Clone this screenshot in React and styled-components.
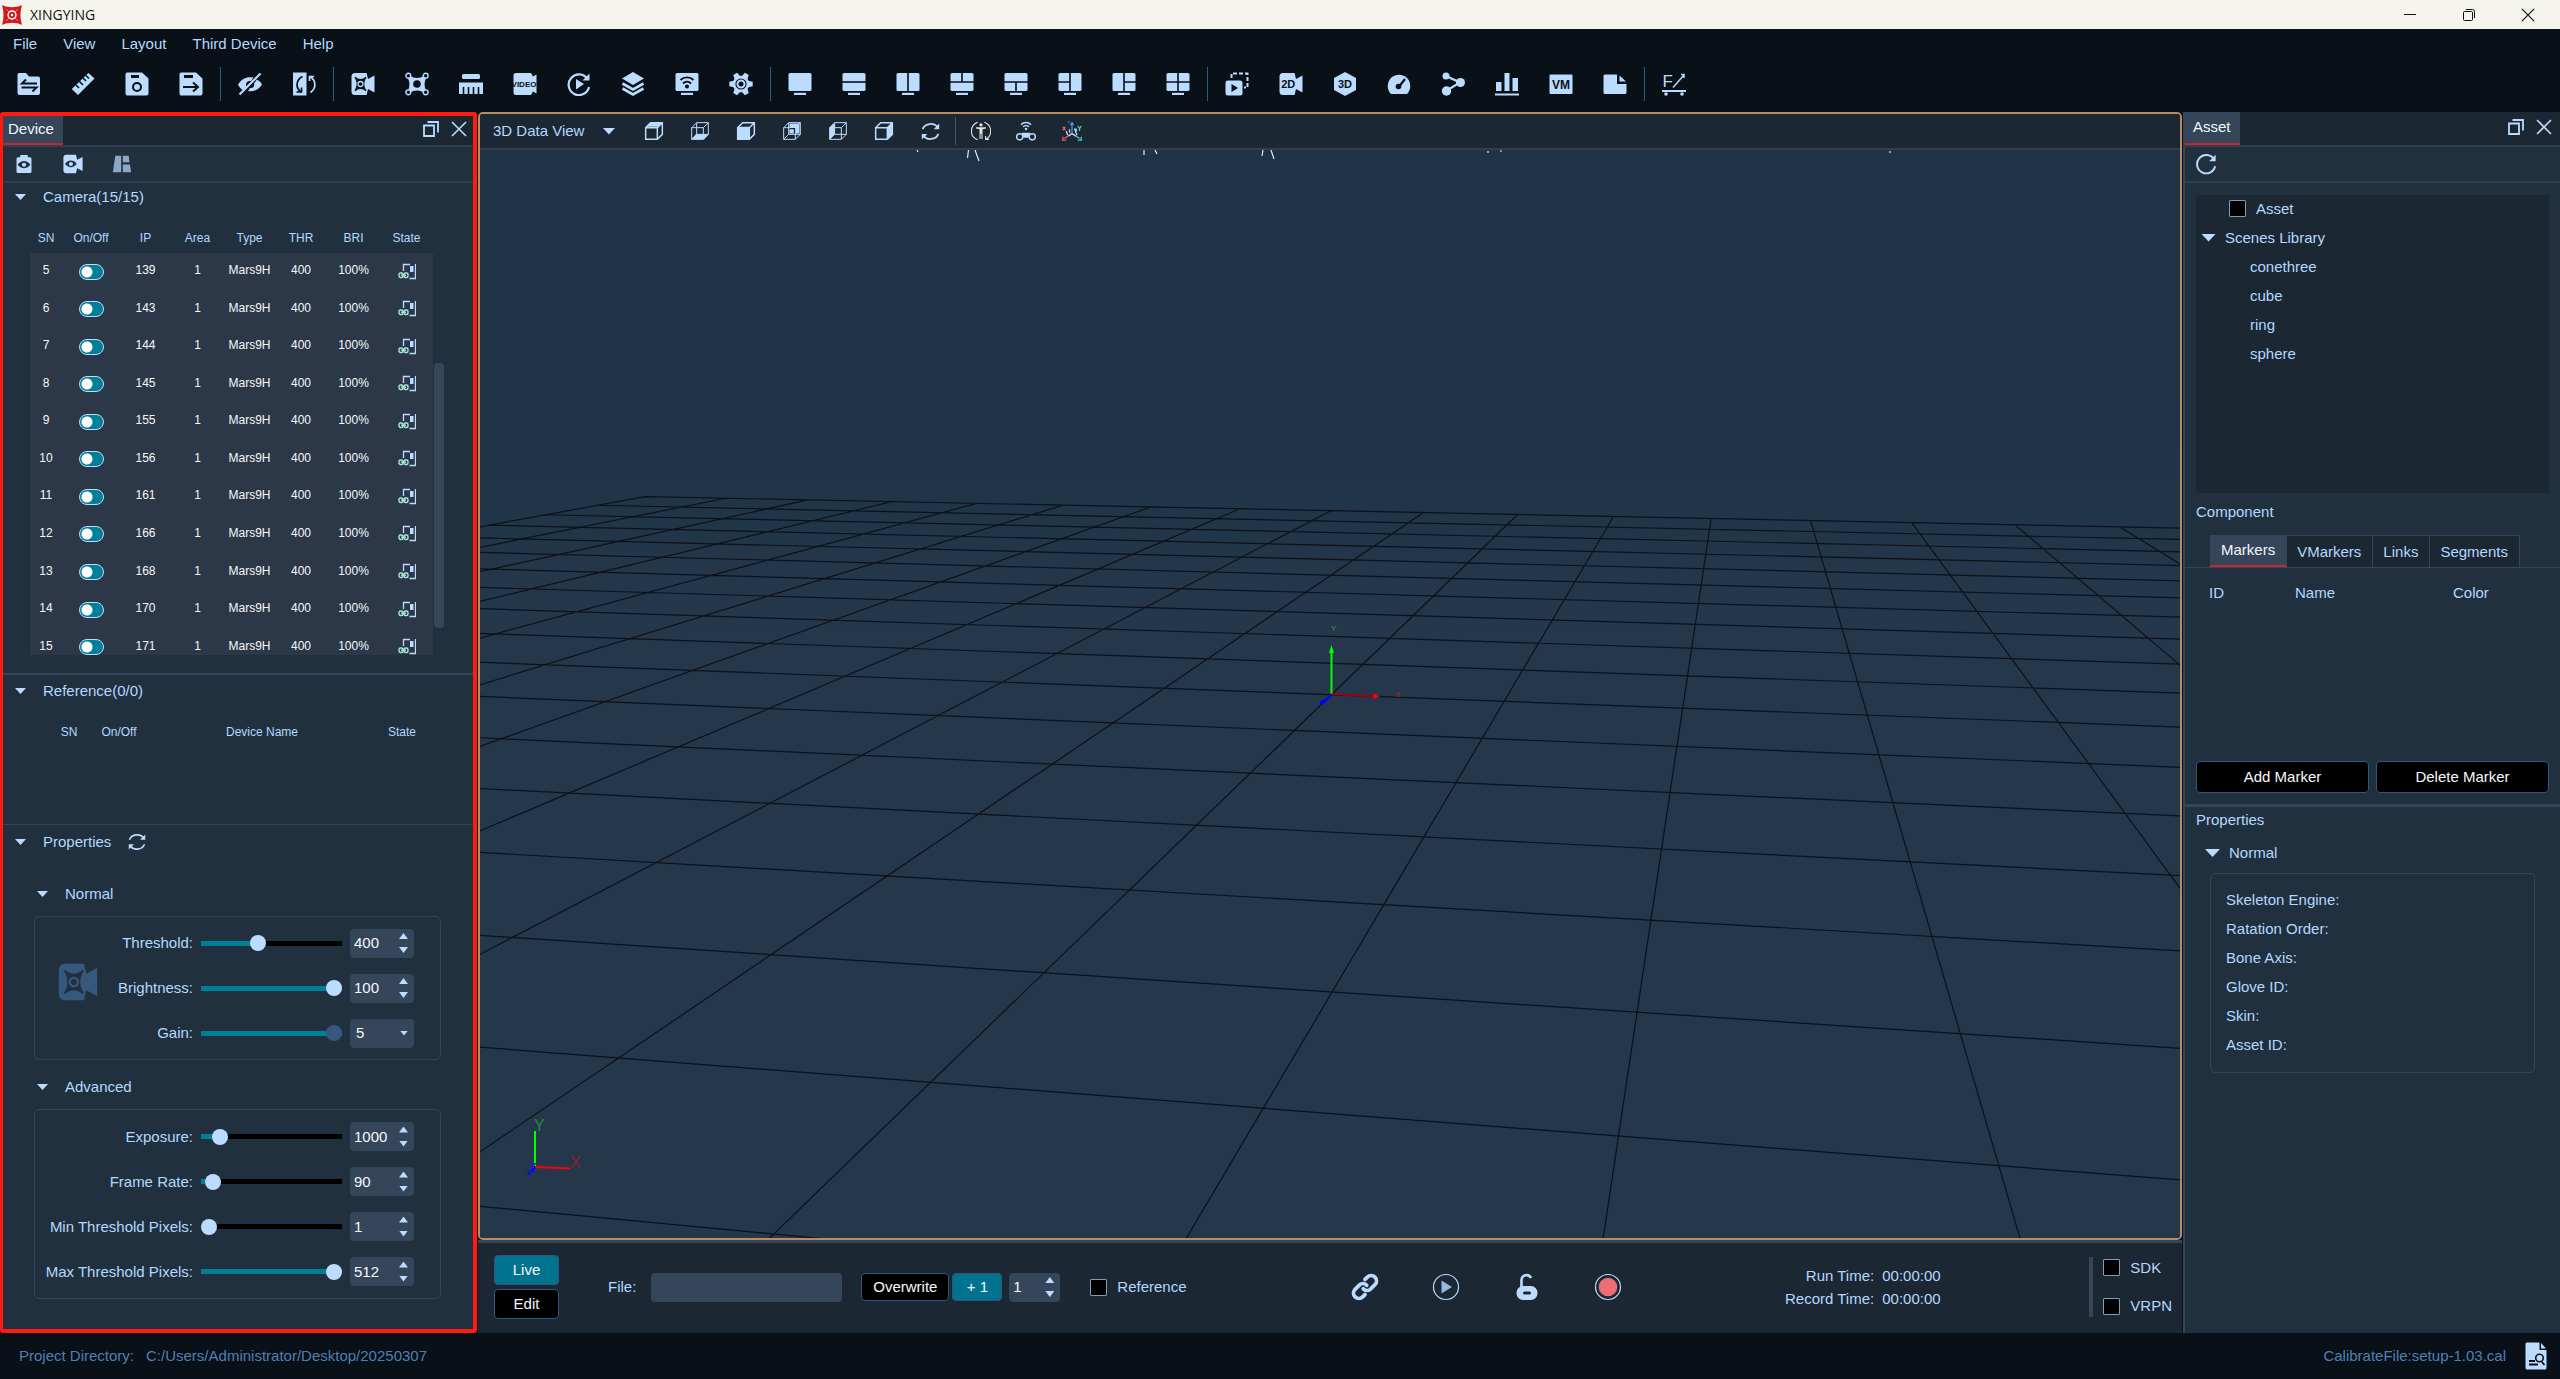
import React from "react";
import styled, { createGlobalStyle, css } from "styled-components";

const c = {
  ice: "#bbdcff",
  text: "#b4d8ff",
  white: "#f4f8fc",
  black: "#091017",
  deep: "#1b2733",
  panel: "#21303e",
  line: "#35465a",
  rule: "#2d3f51",
  teal: "#00738f",
  tealBar: "#008098",
  steel: "#35587c",
  red: "#c9252d",
};

const GlobalStyle = createGlobalStyle`
  * { box-sizing: border-box; }
  html, body { margin: 0; }
  body {
    background: ${c.black};
    color: ${c.text};
    font: 15px/20px "Liberation Sans", Arial, sans-serif;
  }
  button, input, select { font: inherit; color: inherit; }
`;

/* ---------- shared ---------- */

const Shell = styled.div`
  display: flex;
  flex-direction: column;
  min-height: 100vh;
`;

const Bare = styled.button`
  display: flex;
  align-items: center;
  justify-content: center;
  padding: 0;
  border: 0;
  background: none;
`;

const IconSvg = styled.svg`
  display: block;
  flex: none;
  width: ${(p) => p.$size}px;
  height: ${(p) => p.$size}px;
  fill: ${c.ice};
`;

const Triangle = styled.span`
  display: block;
  flex: none;
  width: ${(p) => p.$w || 11}px;
  height: ${(p) => p.$h || 6}px;
  background: ${c.ice};
  clip-path: ${(p) => (p.$up ? "polygon(50% 0, 100% 100%, 0 100%)" : "polygon(0 0, 100% 0, 50% 100%)")};
`;

/* ---------- title, menu and tool bars ---------- */

const TitleBar = styled.header`
  display: flex;
  align-items: center;
  gap: 8px;
  height: 29px;
  padding: 0 20px 0 2px;
  background: #f4f4ec;
  color: #111;
  font: 14px/20px "Open Sans", "Noto Sans", sans-serif;
`;

const AppName = styled.h1`
  flex: 1;
  margin: 0;
  font: inherit;
`;

const WindowButtons = styled.div`
  display: flex;
  gap: 35px;
`;

const WindowButton = styled(Bare)`
  width: 24px;
  height: 24px;
`;

const MenuBar = styled.nav`
  display: flex;
  height: 30px;
`;

const MenuItem = styled.button`
  padding: 0 13px;
  border: 0;
  background: none;
  color: ${c.text};
`;

const ToolBar = styled.div`
  display: flex;
  align-items: center;
  height: 53px;
  padding: 0 0 3px 2px;
`;

const ToolButton = styled(Bare)`
  width: ${(p) => p.$w || 54}px;
  height: 34px;
`;

const ToolRule = styled.span`
  width: 1px;
  height: ${(p) => p.$h || 34}px;
  margin: 0 2px;
  background: ${c.steel};
`;

/* ---------- docked panels ---------- */

const Workspace = styled.main`
  display: flex;
  flex: 1;
`;

const DevicePanel = styled.section`
  flex: none;
  width: 477px;
  border: 4px solid #ff1b10;
  border-left-width: 3px;
  border-radius: 3px;
  background: ${c.panel};
`;

const AssetPanel = styled.section`
  flex: none;
  width: 377px;
  border-left: 2px solid ${c.line};
  background: ${c.panel};
`;

const DockHead = styled.div`
  display: flex;
  align-items: stretch;
  height: ${(p) => p.$h}px;
  background: ${c.deep};
  border-bottom: 2px solid ${c.rule};
`;

const DockTab = styled.button`
  padding: 0 9px 2px ${(p) => p.$left}px;
  border: 0;
  border-bottom: 2px solid ${c.red};
  background: #35455a;
  color: ${c.white};
`;

const DockActions = styled.div`
  display: flex;
  align-items: center;
  gap: 8px;
  margin-left: auto;
  padding: 0 ${(p) => p.$end}px 3px 0;
`;

const DockAction = styled(Bare)`
  width: 20px;
  height: 20px;
`;

const DockTools = styled.div`
  display: flex;
  align-items: center;
  gap: ${(p) => p.$gap || 0}px;
  height: 36px;
  padding-left: 10px;
  border-bottom: 2px solid ${c.rule};
`;

const DockTool = styled(Bare)`
  width: 22px;
  height: 24px;
`;

const Fold = styled.button`
  display: flex;
  align-items: center;
  gap: 17px;
  padding: 0;
  border: 0;
  background: none;
  color: ${c.text};
  line-height: 20px;
`;

/* ---------- device tables ---------- */

const CameraSection = styled.div`
  height: 492px;
  padding: 4px 28px 0 12px;
  border-bottom: 2px solid ${c.line};
`;

const CameraScroll = styled.div`
  display: flex;
  gap: 1px;
  height: 433px;
  margin: 15px 0 0 15px;
  overflow: hidden;
`;

const CameraTable = styled.table`
  width: 403px;
  height: 444px;
  table-layout: fixed;
  border-collapse: collapse;
  font-size: 12px;
  line-height: 16px;
  text-align: center;

  thead tr { height: 31px; }
  th { padding: 0; font-weight: normal; }
  td { padding: 0 0 3px; color: ${c.white}; vertical-align: middle; }
  td.mark { padding: 0; }
  tbody { background: #2c3848; }
`;

const ScrollThumb = styled.span`
  flex: none;
  width: 10px;
  height: 265px;
  margin-top: 141px;
  border-radius: 4px;
  background: #35455a;
`;

const Switch = styled.input`
  appearance: none;
  display: block;
  width: 25px;
  height: 16px;
  margin: 0 auto;
  border: 1px solid ${c.ice};
  border-radius: 8px;
  background: radial-gradient(circle at 7px 7px, #fff 5px, ${c.tealBar} 6px);
`;

const Centered = styled.span`
  display: flex;
  justify-content: center;
`;

const ReferenceSection = styled.div`
  height: 150px;
  padding: 6px 28px 0 12px;
  border-bottom: 1px solid ${c.line};
`;

const ReferenceTable = styled.table`
  width: 380px;
  margin: 23px 0 0 37px;
  table-layout: fixed;
  border-collapse: collapse;
  font-size: 12px;
  line-height: 16px;
  th { padding: 0; font-weight: normal; }
`;

/* ---------- camera properties ---------- */

const PropertySection = styled.div`
  padding: 7px 28px 30px 12px;
`;

const PropertyTitle = styled.div`
  display: flex;
  align-items: center;
  gap: 17px;
`;

const SubTitle = styled.div`
  padding: ${(p) => p.$top}px 0 12px 22px;
`;

const Group = styled.div`
  display: flex;
  align-items: center;
  width: 407px;
  height: ${(p) => p.$h}px;
  margin-left: 19px;
  padding-right: 26px;
  border: 1px solid ${c.line};
  border-radius: 5px;
`;

const GroupIcon = styled.span`
  margin: 0 0 12px 23px;
`;

const Fields = styled.div`
  display: grid;
  flex: 1;
  gap: 16px;
`;

const FieldRow = styled.div`
  display: grid;
  grid-template-columns: 1fr 141px 64px;
  gap: 8px;
  align-items: center;
  text-align: right;
`;

const Range = styled.input`
  appearance: none;
  width: 141px;
  height: 16px;
  margin: 0;
  background: linear-gradient(to right, ${c.tealBar} ${(p) => p.$fill}%, #000 ${(p) => p.$fill}%) center / 100% 5px no-repeat;

  &::-webkit-slider-thumb {
    appearance: none;
    width: 16px;
    height: 16px;
    border-radius: 50%;
    background: ${(p) => (p.disabled ? c.steel : c.ice)};
  }
`;

const fieldBox = css`
  height: 29px;
  border: 0;
  border-radius: 4px;
  background: #35455a;
  color: ${c.white};
`;

const SpinBox = styled.span`
  ${fieldBox}
  display: flex;
  align-items: center;
  width: ${(p) => p.$w}px;
  padding-right: 6px;
`;

const SpinInput = styled.input`
  flex: 1;
  min-width: 0;
  padding: 0 0 0 4px;
  border: 0;
  background: none;
`;

const SpinArrows = styled.span`
  display: flex;
  flex-direction: column;
  gap: 8px;
`;

const SelectWrap = styled.span`
  position: relative;
  display: block;
`;

const Select = styled.select`
  ${fieldBox}
  appearance: none;
  width: 64px;
  padding: 0 6px;
`;

const SelectArrow = styled.span`
  position: absolute;
  right: 6px;
  top: 12px;
  pointer-events: none;
`;

/* ---------- viewport ---------- */

const Center = styled.section`
  display: flex;
  flex: 1;
  flex-direction: column;
  min-width: 0;
`;

const Viewport = styled.div`
  display: flex;
  flex: 1;
  flex-direction: column;
  margin: 0 1px;
  border: 2px solid #b98c60;
  border-radius: 5px;
  overflow: hidden;
`;

const ViewHead = styled.div`
  display: flex;
  align-items: center;
  height: 36px;
  border-bottom: 2px solid ${c.rule};
  background: ${c.deep};
`;

const ViewPicker = styled.button`
  display: flex;
  align-items: center;
  gap: 18px;
  margin-right: 16px;
  padding: 0 0 0 13px;
  border: 0;
  background: none;
  color: ${c.text};
`;

const SceneArea = styled.div`
  position: relative;
  flex: 1;
  background: linear-gradient(#1f3246, #1f3448 28%, #25374b 44%);
`;

const SceneSvg = styled.svg`
  position: absolute;
  inset: 0;
  width: 100%;
  height: 100%;
  font-family: "Liberation Sans", Arial, sans-serif;
`;

/* ---------- transport ---------- */

const Transport = styled.div`
  display: flex;
  align-items: center;
  justify-content: space-between;
  height: 93px;
  margin: 0 1px;
  padding: 0 10px 2px 16px;
  border-top: 3px solid ${c.line};
  background: ${c.deep};
`;

const ModeButtons = styled.div`
  display: grid;
  gap: 4px;
  margin-right: 49px;
`;

const PushButton = styled.button`
  width: ${(p) => (p.$w ? p.$w + "px" : "auto")};
  height: ${(p) => p.$h || 28}px;
  padding: 0;
  border: 1px solid #2f567f;
  border-radius: 4px;
  background: ${(p) => (p.$on ? c.teal : "#000")};
  color: ${c.white};
`;

const FileGroup = styled.div`
  display: flex;
  align-items: center;
`;

const FileLabel = styled.label`
  margin-right: 15px;
`;

const FileInput = styled.input`
  ${fieldBox}
  width: 191px;
  margin-right: 19px;
  padding: 0 6px;
`;

const SaveButtons = styled.div`
  display: flex;
  gap: 3px;
  margin-right: 7px;
`;

const Check = styled.label`
  display: flex;
  align-items: center;
  gap: 10px;
`;

const TakeCheck = styled(Check)`
  margin-left: 30px;
`;

const Box = styled.input`
  appearance: none;
  flex: none;
  width: 17px;
  height: 17px;
  margin: 0;
  border: 1px solid #7f9cba;
  border-radius: 1px;
  background: #000;
`;

const Controls = styled.div`
  display: flex;
  gap: 53px;
  margin: 0 20px 0 22px;
`;

const ControlButton = styled(Bare)`
  width: 28px;
  height: 28px;
`;

const Times = styled.dl`
  display: grid;
  grid-template-columns: auto auto;
  column-gap: 8px;
  row-gap: 3px;
  margin: 0 6px 0 0;
  text-align: right;
  dd { margin: 0; }
`;

const Streams = styled.div`
  display: grid;
  gap: 17px;
  height: 60px;
  padding-left: 10px;
  border-left: 4px solid #35455a;
`;

/* ---------- asset panel ---------- */

const Library = styled.div`
  height: 298px;
  margin: 12px 11px 0;
  background: ${c.deep};
`;

const Tree = styled.ul`
  margin: 0;
  padding: 0;
  list-style: none;
`;

const TreeRow = styled.li`
  display: flex;
  align-items: center;
  gap: ${(p) => p.$gap || 0}px;
  height: 29px;
  padding: 0 0 2px ${(p) => p.$indent}px;
`;

const Caption = styled.h2`
  margin: ${(p) => p.$top}px 11px 13px;
  font: inherit;
`;

const Tabs = styled.div`
  display: flex;
  height: 33px;
  padding-left: 25px;
  border-bottom: 1px solid ${c.line};
`;

const Tab = styled.button`
  padding: ${(p) => (p.$on ? "0 11px 2px" : "0 11px 0 10px")};
  border: solid ${c.line};
  border-width: 1px 1px 0 0;
  border-bottom: ${(p) => (p.$on ? `2px solid ${c.red}` : "0")};
  background: ${(p) => (p.$on ? "#35455a" : c.deep)};
  color: ${(p) => (p.$on ? c.white : c.text)};
`;

const MarkerTable = styled.table`
  width: 340px;
  margin: 15px 0 0 24px;
  table-layout: fixed;
  border-collapse: collapse;
  th { padding: 0; font-weight: normal; text-align: left; line-height: 20px; }
`;

const MarkerArea = styled.div`
  height: 178px;
`;

const MarkerButtons = styled.div`
  display: grid;
  grid-template-columns: 1fr 1fr;
  gap: 7px;
  padding: 0 11px 11px;
  border-bottom: 3px solid ${c.line};
`;

const AssetFold = styled(Fold)`
  gap: 9px;
  margin: 0 0 10px 20px;
`;

const DetailBox = styled.ul`
  height: 200px;
  margin: 0 25px;
  padding: 11px 15px;
  border: 1px solid ${c.line};
  border-radius: 5px;
  list-style: none;
  li { height: 29px; line-height: 29px; }
`;

const StatusBar = styled.footer`
  display: flex;
  align-items: center;
  gap: 12px;
  height: 46px;
  padding: 0 10px 0 19px;
  color: #4f80b4;
`;

const FileState = styled.span`
  margin-left: auto;
  margin-right: 4px;
`;

/* ---------- icons ---------- */

const D = c.black;
const star = "M-6-6.500L-5-7.200C-2-4.200 2-4.200 5-7.200L6-6.500C3.200-3 3.200 3 6 6.500L5 7.200C2 4.200-2 4.200-5 7.200L-6 6.500C-3.200 3-3.200-3-6-6.500Z";

const CameraBody = "M4 1H15.600L17 7L23.500 3.500V20.500L17 17L15.600 23H4A3.500 3.500 0 0 1 .5 19.500V4.500A3.500 3.500 0 0 1 4 1Z";

function CameraGlyph({ hole, tone }) {
  return (
    <g fill={tone}>
      <path d={CameraBody} />
      <g transform="translate(9.500 12)">
        <path d={star} fill={hole} />
        <circle r="2.500" fill="none" stroke={tone} strokeWidth="1.300" />
      </g>
    </g>
  );
}

const screen = (cuts) => (
  <>
    <rect x="0.500" y="1" width="23" height="18" rx="1.500" />
    <rect x="6" y="20.800" width="12" height="2.200" />
    <path d={cuts} stroke={D} strokeWidth="1.600" fill="none" />
  </>
);

const icons = {
  open: (
    <>
      <path d="M2 1H9L12 4.500H21A2 2 0 0 1 23 6.500V21A2 2 0 0 1 21 23H3A2.500 2.500 0 0 1 .5 20.500V2.500A1.500 1.500 0 0 1 2 1Z" />
      <path d="M20 11.500H5L9 7.500M4.500 15.500H19.500L15.500 19.500" fill="none" stroke={D} strokeWidth="2" />
    </>
  ),
  ruler: (
    <>
      <path d="M17.500 1L23.500 6.500L7 23L.8 17Z" />
      <path d="M5 13L8 16M8.500 9.500L12 13M12 6L15 9M15 3.500L18 6.500" stroke={D} strokeWidth="1.500" />
    </>
  ),
  save: (
    <>
      <path d="M3 .5H17L23.500 6.500V21.500A2 2 0 0 1 21.500 23.500H3A2 2 0 0 1 .5 21.500V2.500A2 2 0 0 1 3 .5Z" />
      <path d="M6 3H14V6H6Z" fill={D} />
      <circle cx="12" cy="15" r="4" fill="none" stroke={D} strokeWidth="2" />
    </>
  ),
  export: (
    <>
      <path d="M3 .5H17L23.500 6.500V21.500A2 2 0 0 1 21.500 23.500H3A2 2 0 0 1 .5 21.500V2.500A2 2 0 0 1 3 .5Z" />
      <path d="M5 3H14V6H5Z" fill={D} />
      <path d="M4 15H18M14 10.500L19 15L14 19.500" fill="none" stroke={D} strokeWidth="2" />
    </>
  ),
  hide: (
    <>
      <path d="M0 12.500C4 6 9 4.500 15.500 5.500L13 9C9 8.500 7.500 11 8.200 15L5.500 18.500C3 17 1 15 0 12.500Z" />
      <path d="M19 7.500C21.500 9 23 10.500 24 12.500C20 18.500 15 20 10 19L12 16C15.500 16.500 17 13.500 16 11.500Z" />
      <path d="M22.500 1.500L1.500 22.500" stroke={c.ice} strokeWidth="2.200" />
    </>
  ),
  rotate: (
    <>
      <path d="M1 .5H14.500V23.500H1Z" />
      <path d="M10.500 4.500C3.500 8 3.500 16 9 20M4.500 20H9.500V15.500" fill="none" stroke={D} strokeWidth="1.700" />
      <path d="M17.500 4.500C24.500 8 24.500 16 18.500 20.500M17.500 9V4.500H22" fill="none" stroke={c.ice} strokeWidth="1.700" />
    </>
  ),
  camera: <CameraGlyph hole={D} tone={c.ice} />,
  rigid: (
    <>
      <path d="M4 5C9 8 15 8 20 5C17.500 9.500 17.500 15 20 19.500C15 16.500 9 16.500 4 19.500C6.500 15 6.500 9.500 4 5Z" strokeWidth="3" stroke={c.ice} strokeLinejoin="round" />
      <circle cx="12" cy="12" r="3.800" fill={D} />
      <g fill={D} stroke={c.ice} strokeWidth="1.400">
        <circle cx="3.300" cy="3.700" r="2.400" /><circle cx="20.700" cy="3.700" r="2.400" />
        <circle cx="3.300" cy="20.300" r="2.400" /><circle cx="20.700" cy="20.300" r="2.400" />
      </g>
    </>
  ),
  measure: (
    <>
      <rect x="3" y="2" width="18" height="5" rx="1.500" />
      <path d="M0 10.500H24V22H0Z" />
      <path d="M4.500 15V22M9.500 15V22M14.500 15V22M19.500 15V22" stroke={D} strokeWidth="1.600" />
    </>
  ),
  video: (
    <>
      <path d="M3 1H18L20 4.500L23.500 2.500V21.500L20 19.500L18 23H3A2.500 2.500 0 0 1 .5 20.500V3.500A2.500 2.500 0 0 1 3 1Z" />
      <text x="11" y="15" textAnchor="middle" fontSize="8" fontWeight="bold" fill={D}>VIDEO</text>
    </>
  ),
  replay: (
    <>
      <path d="M20.500 7A10.300 10.300 0 1 0 22 15" fill="none" stroke={c.ice} strokeWidth="2.200" />
      <path d="M22.500 1.500V8.500H15.500Z" />
      <path d="M9 7L17 12L9 17.500Z" />
    </>
  ),
  layers: (
    <>
      <path d="M12 0L23 6.500L12 13L1 6.500Z" />
      <path d="M1.500 11.500L12 17.500L22.500 11.500M1.500 16.500L12 22.500L22.500 16.500" fill="none" stroke={c.ice} strokeWidth="2.600" />
    </>
  ),
  cast: (
    <>
      {screen("")}
      <g fill="none" stroke={D} strokeWidth="1.800"><path d="M5.500 8C9 4.500 15 4.500 18.500 8M8 11.500C10.500 9 13.500 9 16 11.500" /></g>
      <circle cx="12" cy="14.500" r="2" fill={D} />
    </>
  ),
  gear: (
    <>
      <circle cx="12" cy="12" r="8.300" />
      {[0, 60, 120, 180, 240, 300].map((a) => (
        <path key={a} d="M18 8.500L23.700 9.800V14.200L18 15.500Z" transform={`rotate(${a} 12 12)`} />
      ))}
      <circle cx="12" cy="12" r="5.600" fill={D} />
      <circle cx="12" cy="12" r="3.500" fill="none" stroke={c.ice} strokeWidth="2" />
    </>
  ),
  s1: screen(""),
  s2: screen("M0 10H24"),
  s3: screen("M12 0V19.500"),
  s4: screen("M0 10H24M12 0V10"),
  s5: screen("M0 10H24M12 10V19.500"),
  s6: screen("M12 0V19.500M0 10H12"),
  s7: screen("M12 0V19.500M12 10H24"),
  s8: screen("M12 0V19.500M0 10H24"),
  copyPlay: (
    <>
      <rect x="0.500" y="8.500" width="17" height="15" rx="2.500" />
      <path d="M6.500 12V20L13 16Z" fill={D} />
      <path d="M6.500 6V1.500H22.500V15.500H19" fill="none" stroke={c.ice} strokeWidth="2" strokeDasharray="4 2" />
    </>
  ),
  cam2d: (
    <>
      <path d={CameraBody} />
      <text x="9.200" y="16" textAnchor="middle" fontSize="11" fontWeight="bold" fill={D}>2D</text>
    </>
  ),
  cube3d: (
    <>
      <path d="M12 0L23 6V18L12 24L1 18V6Z" />
      <text x="12" y="16" textAnchor="middle" fontSize="11" fontWeight="bold" fill={D}>3D</text>
    </>
  ),
  gauge: (
    <>
      <path d="M4 22C-1 17 .5 10 3.500 6.500C8 1.500 16 1.500 20.500 6.500C24 10.500 24.500 17 20 22Z" />
      <path d="M18 7L12.500 14" stroke={D} strokeWidth="2.200" />
      <circle cx="11.500" cy="14.500" r="2.800" fill={D} />
    </>
  ),
  nodes: (
    <>
      <path d="M5 4L19 10.500L5 19" fill="none" stroke={c.ice} strokeWidth="2.200" />
      <circle cx="5" cy="4" r="3.500" /><circle cx="19.500" cy="10.500" r="4.500" /><circle cx="5.500" cy="19" r="4.700" />
    </>
  ),
  bars: <path d="M1 10H6.500V19H1ZM9.500 1H14.500V19H9.500ZM17.500 6H23V19H17.500ZM0 21.500H24V23.500H0Z" />,
  vm: (
    <>
      <rect x="0.500" y="2.500" width="23" height="19.500" rx="1" />
      <text x="12" y="16.500" textAnchor="middle" fontSize="12" fontWeight="bold" fill={D}>VM</text>
    </>
  ),
  note: <path d="M2 2.500H14V12H23.500V20.500A1.500 1.500 0 0 1 22 22H2A1.500 1.500 0 0 1 .5 20.500V4A1.500 1.500 0 0 1 2 2.500ZM16.500 3.500L23 9.500H16.500Z" />,
  force: (
    <>
      <text x="0.500" y="15" fontSize="17">F</text>
      <path d="M11 15.500L22 3M22 6V2.500H19" fill="none" stroke={c.ice} strokeWidth="1.500" />
      <path d="M0 18H24V20H0Z" />
      <circle cx="4" cy="22" r="1.800" /><circle cx="20" cy="22" r="1.800" />
    </>
  ),
};

const toolGroups = [
  ["open", "ruler", "save", "export"],
  ["hide", "rotate"],
  ["camera", "rigid", "measure", "video", "replay", "layers", "cast", "gear"],
  ["s1", "s2", "s3", "s4", "s5", "s6", "s7", "s8"],
  ["copyPlay", "cam2d", "cube3d", "gauge", "nodes", "bars", "vm", "note"],
  ["force"],
];

/* face: [filled face, see-through cube, edges drawn dark over the fill] */
const cubeFaces = {
  top: ["M7 2H22L17 7H2Z", false, ""],
  bottom: ["M2 22L7 16H22L17 22Z", true, ""],
  front: ["M2 7H16V22H2Z", false, ""],
  back: ["M9 3H21V15H9Z", true, "M9 9H15V15"],
  left: ["M2 8L8 2V16L2 22Z", true, ""],
  right: ["M16 8L22 2V16L16 22Z", false, ""],
};

function CubeIcon({ face }) {
  const [fill, open, dark] = cubeFaces[face];
  return (
    <IconSvg $size={20} viewBox="0 0 24 24" aria-hidden="true">
      <path d={fill} />
      <path
        d={"M2 8L8 2H22V16L16 22H2Z" + (open ? "M8 2V16H22M8 16L2 22M2 8H16V22M16 8L22 2" : "M2 8H16V22M16 8L22 2")}
        fill="none"
        stroke={c.ice}
        strokeWidth={open ? 1.2 : 1.8}
      />
      <path d={dark} fill="none" stroke={c.deep} strokeWidth="1.500" />
    </IconSvg>
  );
}

function SyncIcon({ size }) {
  return (
    <IconSvg $size={size} viewBox="0 0 24 24" aria-hidden="true">
      <path d="M2 9C5 1 17 .5 21 7M22 15C19 23 7 23.500 3 17" fill="none" stroke={c.ice} strokeWidth="2.200" />
      <path d="M23 2V9H16ZM1 22V15H8Z" />
    </IconSvg>
  );
}

function FloatIcon() {
  return (
    <IconSvg $size={16} viewBox="0 0 16 16" aria-hidden="true">
      <path d="M1 4.500H11V15H1ZM4.500 1H15V11.500" fill="none" stroke={c.ice} strokeWidth="1.800" />
    </IconSvg>
  );
}

function CrossIcon({ color, size, width }) {
  return (
    <IconSvg $size={size} viewBox="0 0 16 16" aria-hidden="true">
      <path d="M1 1L15 15M15 1L1 15" stroke={color} strokeWidth={width} />
    </IconSvg>
  );
}

function StateIcon() {
  return (
    <IconSvg $size={18} viewBox="0 0 18 18" aria-hidden="true">
      <path d="M5.500 8V1.500H12M11.500 15.500H17.500V1" fill="none" stroke={c.ice} strokeWidth="1.300" />
      <rect x="12" y="3" width="3.500" height="6" />
      <g fill="none" stroke="#a5e8dc" strokeWidth="1.400">
        <rect x="1" y="10" width="4" height="4.500" rx="1.500" />
        <rect x="6" y="10" width="4" height="4.500" rx="1.500" />
        <path d="M3 12.200H8" />
      </g>
    </IconSvg>
  );
}

/* ---------- parts ---------- */

function Spin({ label, value, width }) {
  return (
    <SpinBox $w={width}>
      <SpinInput aria-label={label} defaultValue={value} />
      <SpinArrows>
        <Bare aria-label={label + " up"}><Triangle $up $w={9} $h={6} /></Bare>
        <Bare aria-label={label + " down"}><Triangle $w={9} $h={6} /></Bare>
      </SpinArrows>
    </SpinBox>
  );
}

function SliderRow({ label, value, percent, options }) {
  const id = label.toLowerCase().replace(/ /g, "-");
  return (
    <FieldRow>
      <label htmlFor={id}>{label}:</label>
      <Range id={id} type="range" min="0" max="100" defaultValue={percent} $fill={percent} disabled={Boolean(options)} />
      {options ? (
        <SelectWrap>
          <Select aria-label={label + " value"} defaultValue={value}>
            {options.map((o) => <option key={o}>{o}</option>)}
          </Select>
          <SelectArrow><Triangle $w={8} $h={5} /></SelectArrow>
        </SelectWrap>
      ) : (
        <Spin label={label + " value"} value={value} width={64} />
      )}
    </FieldRow>
  );
}

const cameras = [
  [5, 139], [6, 143], [7, 144], [8, 145], [9, 155], [10, 156],
  [11, 161], [12, 166], [13, 168], [14, 170], [15, 171],
];

const cameraColumns = [
  ["SN", 32], ["On/Off", 58], ["IP", 51], ["Area", 53],
  ["Type", 51], ["THR", 52], ["BRI", 53], ["State", 53],
];

function Device() {
  return (
    <DevicePanel>
      <DockHead $h={31}>
        <DockTab $left={5}>Device</DockTab>
        <DockActions $end={4}>
          <DockAction aria-label="Float"><FloatIcon /></DockAction>
          <DockAction aria-label="Close"><CrossIcon color={c.ice} size={16} width={1.6} /></DockAction>
        </DockActions>
      </DockHead>
      <DockTools $gap={27}>
        <DockTool aria-label="Show camera">
          <IconSvg $size={18} viewBox="0 0 24 24" aria-hidden="true">
            <path d="M7 0H17V3H20A2 2 0 0 1 22 5V22A2 2 0 0 1 20 24H4A2 2 0 0 1 2 22V5A2 2 0 0 1 4 3H7Z" />
            <path d="M3.500 13C8 6.500 16 6.500 20.500 13C16 19 8 19 3.500 13Z" fill={c.panel} />
            <circle cx="12" cy="13" r="2.800" />
          </IconSvg>
        </DockTool>
        <DockTool aria-label="Camera view">
          <IconSvg $size={20} viewBox="0 0 24 24" aria-hidden="true">
            <path d={CameraBody} />
            <path d="M2.500 12C6 6.500 13 6.500 16.500 12C13 17 6 17 2.500 12Z" fill={c.panel} />
            <circle cx="9.500" cy="12" r="2.500" />
          </IconSvg>
        </DockTool>
        <DockTool aria-label="Split view">
          <IconSvg $size={20} viewBox="0 0 24 24" aria-hidden="true" opacity="0.700">
            <path d="M4 2H11V22H1ZM13 2H20L21 10H13ZM13 12.500H21.500L23 22H13Z" />
          </IconSvg>
        </DockTool>
      </DockTools>

      <CameraSection>
        <Fold><Triangle />Camera(15/15)</Fold>
        <CameraScroll>
          <CameraTable>
            <colgroup>{cameraColumns.map(([n, w]) => <col key={n} width={w} />)}</colgroup>
            <thead>
              <tr>{cameraColumns.map(([n]) => <th key={n}>{n}</th>)}</tr>
            </thead>
            <tbody>
              {cameras.map(([sn, ip]) => (
                <tr key={sn}>
                  <td>{sn}</td>
                  <td className="mark"><Switch type="checkbox" aria-label={"Camera " + sn} defaultChecked /></td>
                  <td>{ip}</td>
                  <td>1</td>
                  <td>Mars9H</td>
                  <td>400</td>
                  <td>100%</td>
                  <td className="mark"><Centered><StateIcon /></Centered></td>
                </tr>
              ))}
            </tbody>
          </CameraTable>
          <ScrollThumb />
        </CameraScroll>
      </CameraSection>

      <ReferenceSection>
        <Fold><Triangle />Reference(0/0)</Fold>
        <ReferenceTable>
          <colgroup><col width="34" /><col width="66" /><col width="220" /><col width="60" /></colgroup>
          <thead><tr><th>SN</th><th>On/Off</th><th>Device Name</th><th>State</th></tr></thead>
        </ReferenceTable>
      </ReferenceSection>

      <PropertySection>
        <PropertyTitle>
          <Fold><Triangle />Properties</Fold>
          <Bare aria-label="Refresh properties"><SyncIcon size={18} /></Bare>
        </PropertyTitle>
        <SubTitle $top={32}><Fold><Triangle />Normal</Fold></SubTitle>
        <Group $h={144}>
          <GroupIcon>
            <IconSvg $size={40} viewBox="0 0 24 24" aria-hidden="true">
              <CameraGlyph hole={c.panel} tone={c.steel} />
            </IconSvg>
          </GroupIcon>
          <Fields>
            <SliderRow label="Threshold" value="400" percent={39} />
            <SliderRow label="Brightness" value="100" percent={100} />
            <SliderRow label="Gain" value="5" percent={100} options={["1", "2", "3", "4", "5"]} />
          </Fields>
        </Group>
        <SubTitle $top={17}><Fold><Triangle />Advanced</Fold></SubTitle>
        <Group $h={190}>
          <Fields>
            <SliderRow label="Exposure" value="1000" percent={9} />
            <SliderRow label="Frame Rate" value="90" percent={3} />
            <SliderRow label="Min Threshold Pixels" value="1" percent={0} />
            <SliderRow label="Max Threshold Pixels" value="512" percent={100} />
          </Fields>
        </Group>
      </PropertySection>
    </DevicePanel>
  );
}

/* Ground plane: grid cell (u, v) to view coordinates through the camera's perspective. */
function project(u, v) {
  const w = 1 - 0.016199 * u - 0.082048 * v;
  return [
    (148.4 * u - 143.15 * v + 1331.4) / w - 480,
    (-4.77 * u - 24.2 * v + 694.7) / w - 150,
  ];
}

function gridPath() {
  let d = "";
  for (let i = -10; i <= 10; i++) {
    const [ax, ay] = project(i, -10);
    const [bx, by] = project(i, 9);
    const [px, py] = project(-10, i < 10 ? i : 9);
    const [qx, qy] = project(10, i < 10 ? i : 9);
    d += `M${ax} ${ay}L${bx} ${by}M${px} ${py}L${qx} ${qy}`;
  }
  return d;
}

function Scene() {
  return (
    <SceneArea>
      <SceneSvg viewBox="0 0 1700 1088" preserveAspectRatio="xMidYMid slice" role="img" aria-label="3D scene">
        <path d={gridPath()} stroke="#0b1118" strokeWidth="1.200" fill="none" />
        <path
          d="M437 0L438 2M488.500 0L487.500 8M495 0L499 11M664 0V5M675 0L677 4M783 0L782 6M791 0L794 9M1008 1V3M1020 1H1022M1410 1V3"
          stroke="#e6ebef"
          strokeWidth="1.200"
        />
        <g fill="none" strokeWidth="2">
          <path d="M851.500 544V500" stroke="#0f0" />
          <path d="M851.500 544L896 546.500" stroke="#a00010" />
          <path d="M851.500 545L842 554" stroke="#00f" />
        </g>
        <path d="M849 503L851.500 495L854 503Z" fill="#0f0" />
        <path d="M893 543.500L900 546.500L893 549Z" fill="#f00" />
        <path d="M847 548L840 551L840 556Z" fill="#00f" />
        <text x="851" y="481" fontSize="8" fill="#1fae3c">Y</text>
        <text x="915" y="547" fontSize="8" fill="#cc1420">X</text>
        <g fill="none" strokeWidth="2">
          <path d="M55 1016V981" stroke="#0f0" />
          <path d="M55 1017L90 1018.500" stroke="#f00" />
          <path d="M55 1017L48 1024" stroke="#00f" strokeWidth="3" />
        </g>
        <text x="54" y="981" fontSize="16" fill="#1f9038">Y</text>
        <text x="90" y="1018" fontSize="16" fill="#93202f">X</text>
        <text x="48" y="1023" fontSize="14" fill="#2020c0">Z</text>
      </SceneSvg>
    </SceneArea>
  );
}

function DataView() {
  return (
    <Viewport>
      <ViewHead>
        <ViewPicker>3D Data View<Triangle $w={13} $h={7} /></ViewPicker>
        {Object.keys(cubeFaces).map((f) => (
          <ToolButton key={f} $w={46} aria-label={f + " view"}><CubeIcon face={f} /></ToolButton>
        ))}
        <ToolButton $w={46} aria-label="Reset view"><SyncIcon size={19} /></ToolButton>
        <ToolRule $h={28} />
        <ToolButton $w={45} aria-label="Human">
          <IconSvg $size={20} viewBox="0 0 24 24" aria-hidden="true">
            <path d="M8 1.500C-2 5.500-2 19 8 22.500M16 1.500C25.500 5 26 17 18 22M21.500 22H17.500V18" fill="none" stroke="#e9e4dc" strokeWidth="1.300" />
            <circle cx="12" cy="4.700" r="1.900" fill="#e9e4dc" />
            <path d="M6 7.500H18V9L13.800 9.800V21.500H12.500V15H11.500V21.500H10.200V9.800L6 9Z" fill="#e9e4dc" />
          </IconSvg>
        </ToolButton>
        <ToolButton $w={46} aria-label="Wireless devices">
          <IconSvg $size={20} viewBox="0 0 24 24" aria-hidden="true">
            <g fill="none" stroke={c.ice} strokeWidth="1.700">
              <path d="M6 4.500C9 1 15 1 18 4.500M8.500 7C10.500 5 13.500 5 15.500 7" />
              <circle cx="4.500" cy="19" r="3.700" /><circle cx="19.500" cy="19" r="3.700" />
            </g>
            <circle cx="12" cy="9.500" r="1.500" />
            <path d="M7 14H17L15 20H9Z" />
          </IconSvg>
        </ToolButton>
        <ToolButton $w={46} aria-label="Axes">
          <IconSvg $size={20} viewBox="0 0 24 24" aria-hidden="true">
            <g fill="none" strokeWidth="1.600">
              <path d="M12 15V3M10 5L12 2L14 5M9 1H7" stroke="#3f95ef" />
              <path d="M12 15L3 21M1 7L4 11M4 7L1 11M1 19V23H5" stroke="#e8646c" />
              <path d="M12 15L21 21M19 6L21 9L23 6M21 9V12M23 19V23H19" stroke="#4fd0c0" />
              <path d="M5 12L7 17M9 10V14M15 9L18 17M17 9V13M12 15L8 18M12 15L16 18" stroke="#c5d5e5" />
            </g>
          </IconSvg>
        </ToolButton>
      </ViewHead>
      <Scene />
    </Viewport>
  );
}

function TransportBar() {
  return (
    <Transport>
      <FileGroup>
        <ModeButtons>
          <PushButton $on $w={65} $h={30}>Live</PushButton>
          <PushButton $w={65} $h={30}>Edit</PushButton>
        </ModeButtons>
        <FileLabel htmlFor="file">File:</FileLabel>
        <FileInput id="file" type="text" />
        <SaveButtons>
          <PushButton $w={88}>Overwrite</PushButton>
          <PushButton $on $w={50}>+ 1</PushButton>
        </SaveButtons>
        <Spin label="Take" value="1" width={51} />
        <TakeCheck><Box type="checkbox" />Reference</TakeCheck>
      </FileGroup>
      <Controls>
        <ControlButton aria-label="Link">
          <IconSvg $size={28} viewBox="0 0 24 24" aria-hidden="true">
            <g fill="none" stroke={c.ice} strokeWidth="3.200" strokeLinecap="round">
              <path d="M10.500 13.500A4.300 4.300 0 0 0 16.500 14L20.500 10A4.500 4.500 0 0 0 14 3.500L12 5.500" />
              <path d="M13.500 10.500A4.300 4.300 0 0 0 7.500 10L3.500 14A4.500 4.500 0 0 0 10 20.500L12 18.500" />
            </g>
          </IconSvg>
        </ControlButton>
        <ControlButton aria-label="Play">
          <IconSvg $size={28} viewBox="0 0 28 28" aria-hidden="true">
            <circle cx="14" cy="14" r="12.500" fill="none" stroke={c.ice} strokeWidth="1.200" />
            <path d="M9.500 7.500L20 14L9.500 20.500Z" fill="#93b7de" />
          </IconSvg>
        </ControlButton>
        <ControlButton aria-label="Unlock">
          <IconSvg $size={28} viewBox="0 0 28 28" aria-hidden="true">
            <path d="M8.500 14V7A5 5 0 0 1 18 5" fill="none" stroke={c.ice} strokeWidth="2.600" />
            <rect x="3.500" y="13" width="21" height="14" rx="6.500" />
            <rect x="10" y="18.500" width="8" height="3" rx="1.500" fill={c.deep} />
          </IconSvg>
        </ControlButton>
        <ControlButton aria-label="Record">
          <IconSvg $size={28} viewBox="0 0 28 28" aria-hidden="true">
            <circle cx="14" cy="14" r="12.500" fill="none" stroke={c.ice} strokeWidth="1.200" />
            <circle cx="14" cy="14" r="9.300" fill="#e96d72" />
          </IconSvg>
        </ControlButton>
      </Controls>
      <Times>
        <dt>Run Time:</dt><dd>00:00:00</dd>
        <dt>Record Time:</dt><dd>00:00:00</dd>
      </Times>
      <Streams>
        <Check><Box type="checkbox" />SDK</Check>
        <Check><Box type="checkbox" />VRPN</Check>
      </Streams>
    </Transport>
  );
}

function Asset() {
  return (
    <AssetPanel>
      <DockHead $h={35}>
        <DockTab $left={8}>Asset</DockTab>
        <DockActions $end={6}>
          <DockAction aria-label="Float"><FloatIcon /></DockAction>
          <DockAction aria-label="Close"><CrossIcon color={c.ice} size={16} width={1.6} /></DockAction>
        </DockActions>
      </DockHead>
      <DockTools>
        <DockTool aria-label="Reload">
          <IconSvg $size={22} viewBox="0 0 24 24" aria-hidden="true">
            <path d="M20.500 6.500A10 10 0 1 0 22 14.500" fill="none" stroke={c.ice} strokeWidth="2.100" />
            <path d="M22.500 2V9H15.500Z" />
          </IconSvg>
        </DockTool>
      </DockTools>
      <Library>
        <Tree>
          <TreeRow $indent={33}><Check><Box type="checkbox" />Asset</Check></TreeRow>
          <TreeRow $indent={5} $gap={9}><Triangle $w={15} $h={8} />Scenes Library</TreeRow>
          {["conethree", "cube", "ring", "sphere"].map((n) => <TreeRow key={n} $indent={54}>{n}</TreeRow>)}
        </Tree>
      </Library>
      <Caption $top={9}>Component</Caption>
      <Tabs>
        <Tab $on>Markers</Tab><Tab>VMarkers</Tab><Tab>Links</Tab><Tab>Segments</Tab>
      </Tabs>
      <MarkerArea>
        <MarkerTable>
          <colgroup><col width="86" /><col width="158" /><col width="96" /></colgroup>
          <thead><tr><th>ID</th><th>Name</th><th>Color</th></tr></thead>
        </MarkerTable>
      </MarkerArea>
      <MarkerButtons>
        <PushButton $h={32}>Add Marker</PushButton>
        <PushButton $h={32}>Delete Marker</PushButton>
      </MarkerButtons>
      <Caption $top={3}>Properties</Caption>
      <AssetFold><Triangle $w={15} $h={8} />Normal</AssetFold>
      <DetailBox>
        {["Skeleton Engine:", "Ratation Order:", "Bone Axis:", "Glove ID:", "Skin:", "Asset ID:"].map((t) => (
          <li key={t}>{t}</li>
        ))}
      </DetailBox>
    </AssetPanel>
  );
}

export default function App() {
  return (
    <Shell>
      <GlobalStyle />
      <TitleBar>
        <IconSvg $size={20} viewBox="0 0 24 24" aria-hidden="true">
          <path d="M0 0C7 3.500 17 3.500 24 0C21.500 8 21.500 16 24 24C17 20.500 7 20.500 0 24C2.500 16 2.500 8 0 0Z" fill="#d3181f" />
          <circle cx="12" cy="12" r="4.700" fill="none" stroke="#fff" strokeWidth="1.800" />
          <circle cx="12" cy="12" r="1.500" fill="#fff" />
          <path d="M5 5L8.500 8.500M19 5L15.500 8.500M5 19L8.500 15.500M19 19L15.500 15.500" stroke="#f3b5b5" strokeWidth="0.800" />
        </IconSvg>
        <AppName>XINGYING</AppName>
        <WindowButtons>
          <WindowButton aria-label="Minimize">
            <IconSvg $size={12} viewBox="0 0 12 12" aria-hidden="true"><path d="M0 5.500H12" stroke="#111" /></IconSvg>
          </WindowButton>
          <WindowButton aria-label="Restore">
            <IconSvg $size={12} viewBox="0 0 12 12" aria-hidden="true">
              <rect x="0.500" y="2.500" width="9" height="9" rx="1" fill="none" stroke="#111" />
              <path d="M3 .5H9.500A2 2 0 0 1 11.500 2.500V9" fill="none" stroke="#111" />
            </IconSvg>
          </WindowButton>
          <WindowButton aria-label="Close window"><CrossIcon color="#111" size={14} width={1.4} /></WindowButton>
        </WindowButtons>
      </TitleBar>
      <MenuBar>
        {["File", "View", "Layout", "Third Device", "Help"].map((m) => <MenuItem key={m}>{m}</MenuItem>)}
      </MenuBar>
      <ToolBar>
        {toolGroups.map((group, i) => (
          <React.Fragment key={group[0]}>
            {i > 0 && <ToolRule />}
            {group.map((name) => (
              <ToolButton key={name} aria-label={name}>
                <IconSvg $size={24} viewBox="0 0 24 24" aria-hidden="true">{icons[name]}</IconSvg>
              </ToolButton>
            ))}
          </React.Fragment>
        ))}
      </ToolBar>
      <Workspace>
        <Device />
        <Center>
          <DataView />
          <TransportBar />
        </Center>
        <Asset />
      </Workspace>
      <StatusBar>
        <span>Project Directory:</span>
        <span>C:/Users/Administrator/Desktop/20250307</span>
        <FileState>CalibrateFile:setup-1.03.cal</FileState>
        <IconSvg $size={28} viewBox="0 0 28 28" aria-hidden="true">
          <path d="M5 .5H17.500V8H24.500V26A1.500 1.500 0 0 1 23 27.500H5A1.500 1.500 0 0 1 3.500 26V2A1.500 1.500 0 0 1 5 .5ZM19 1L24 6.500H19Z" />
          <path d="M7 19H13M7 22.500H16M20 20L22.500 23" stroke={D} strokeWidth="1.800" />
          <circle cx="17.500" cy="16" r="3.800" fill="none" stroke={D} strokeWidth="1.600" />
        </IconSvg>
      </StatusBar>
    </Shell>
  );
}
